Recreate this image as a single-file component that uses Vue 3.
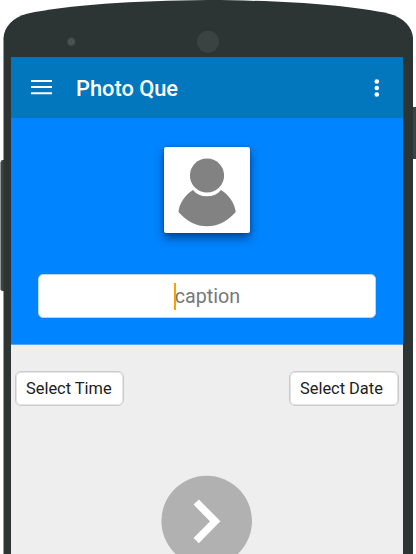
<script setup>
import { ref } from 'vue'

const caption = ref('')
</script>

<template>
  <div class="device">
    <svg class="shell" width="416" height="554" viewBox="0 0 416 554" aria-hidden="true">
      <path d="M1 161.500Q1 160 2.500 160H6V291H2.500Q1 291 1 289.500Z" fill="#3a4442" />
      <path d="M0.500 162V290" stroke="#929896" />
      <path d="M411 107H416V159H411Z" fill="#3a4442" />
      <path
        d="M3.500 554V38C4 27 13 17 27 13.700C67 5 134 0.500 208 0C282 0.500 349 5 389 13.700C403 17 412.500 27 413 38V554Z"
        fill="#2d3534"
      />
      <circle cx="71.300" cy="41.700" r="4.200" fill="#434b4a" />
      <circle cx="71.300" cy="41.700" r="1.900" fill="#414948" stroke="#59605f" stroke-width="1" />
      <circle cx="208" cy="41.800" r="11" fill="#3a4342" />
    </svg>

    <main class="screen">
      <header class="bar">
        <svg class="menu" width="21" height="15" viewBox="0 0 21 15">
          <path d="M0 1H21M0 7.100H21M0 13.300H21" stroke="#fff" stroke-width="2" />
        </svg>
        <h1>Photo Que</h1>
        <svg class="more" width="6" height="20" viewBox="0 0 6 20" fill="#fff">
          <circle cx="2.800" cy="3.500" r="2.300" />
          <circle cx="2.800" cy="10" r="2.300" />
          <circle cx="2.800" cy="16.500" r="2.300" />
        </svg>
      </header>

      <section class="hero">
        <div class="photo">
          <svg width="86" height="86" viewBox="0 0 86 86" fill="#828282">
            <circle cx="43" cy="28.500" r="17.100" />
            <path d="M29 43Q34 49.300 43 49.300T57 43C65 47.700 71 57 71.700 65Q59 79.300 43 79.300T14.500 65C15 57 21 47.700 29 43Z" />
          </svg>
        </div>
        <div class="field">
          <span class="caret"></span>
          <span>{{ caption || 'caption' }}</span>
        </div>
      </section>

      <section class="panel">
        <div class="choices">
          <button type="button" class="time">Select Time</button>
          <button type="button" class="date">Select Date</button>
        </div>
        <div class="next">
          <svg width="92" height="92" viewBox="0 0 92 92">
            <circle cx="45.700" cy="46" r="45.300" fill="#b1b1b1" />
            <path d="M35.200 27L54.200 46.300L35.200 65.600" fill="none" stroke="#fff" stroke-width="7.400" />
          </svg>
        </div>
      </section>
    </main>
  </div>
</template>

<style>
body {
  background: #fff;
  overflow: hidden;
}
</style>

<style scoped>
.device {
  position: relative;
  box-sizing: border-box;
  width: 416px;
  height: 554px;
  padding: 57px 13px 0 11px;
  overflow: hidden;
  font-family: Roboto, "Liberation Sans", sans-serif;
}
.shell {
  position: absolute;
  inset: 0;
}
.screen {
  position: relative;
  display: flex;
  flex-direction: column;
  height: 497px;
  overflow: hidden;
  background: #eee;
}
.bar {
  display: flex;
  align-items: center;
  flex: none;
  box-sizing: border-box;
  height: 61px;
  padding: 0 23px 0 20px;
  background: #0277bd;
}
h1 {
  margin: 3px 0 0 24px;
  color: #fff;
  font-size: 21.8px;
  font-weight: 500;
  line-height: 26px;
}
.more {
  margin-left: auto;
}
.hero {
  display: flex;
  flex-direction: column;
  align-items: center;
  flex: none;
  box-sizing: border-box;
  height: 227px;
  padding-top: 29px;
  background: #0084ff;
  border-bottom: 1px solid #52a8f8;
}
.photo {
  width: 86px;
  height: 86px;
  border-radius: 2px;
  background: #fff;
  box-shadow: 0 5px 10px rgba(0, 30, 70, 0.6), 0 0 3px rgba(0, 40, 80, 0.35);
}
.photo svg,
.next svg {
  display: block;
}
.field {
  display: flex;
  align-items: center;
  justify-content: center;
  box-sizing: border-box;
  width: 338px;
  height: 44px;
  margin-top: 41px;
  border: 1px solid #b9d4ec;
  border-radius: 5px;
  background: #fff;
  color: #777;
  font-size: 19.7px;
}
.caret {
  width: 2px;
  height: 27px;
  margin-right: -1px;
  background: #ffa000;
}
.panel {
  padding: 26px 4px 0;
}
.choices {
  display: flex;
  justify-content: space-between;
}
button {
  box-sizing: border-box;
  width: 109px;
  height: 35px;
  padding: 0 0 1px 9px;
  border: 1px solid #cbcbcb;
  border-radius: 6px;
  background: #fff;
  box-shadow: inset 0 0 0 1px #e4e4e4;
  color: #212121;
  font: 16.4px Roboto, "Liberation Sans", sans-serif;
  padding-left: 10px;
  text-align: left;
  white-space: nowrap;
}
.date {
  width: 110px;
}
.next {
  display: flex;
  justify-content: center;
  margin-top: 69px;
}
</style>
